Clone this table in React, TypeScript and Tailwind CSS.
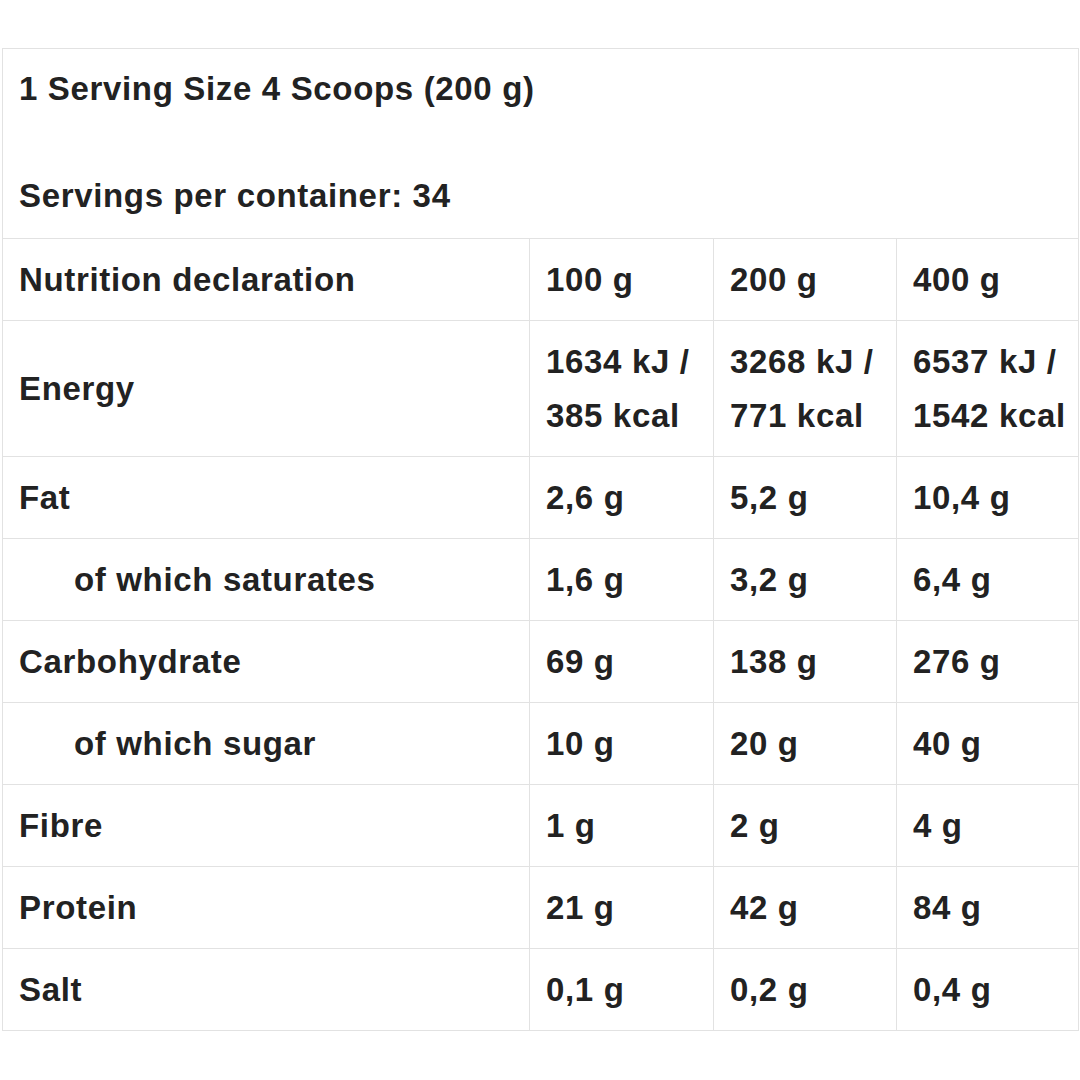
type Row = {
  label: string;
  indent?: boolean;
  values: string[][];
  tall?: boolean;
};

const rows: Row[] = [
  { label: 'Nutrition declaration', values: [['100 g'], ['200 g'], ['400 g']] },
  {
    label: 'Energy',
    tall: true,
    values: [
      ['1634 kJ /', '385 kcal'],
      ['3268 kJ /', '771 kcal'],
      ['6537 kJ /', '1542 kcal'],
    ],
  },
  { label: 'Fat', values: [['2,6 g'], ['5,2 g'], ['10,4 g']] },
  { label: 'of which saturates', indent: true, values: [['1,6 g'], ['3,2 g'], ['6,4 g']] },
  { label: 'Carbohydrate', values: [['69 g'], ['138 g'], ['276 g']] },
  { label: 'of which sugar', indent: true, values: [['10 g'], ['20 g'], ['40 g']] },
  { label: 'Fibre', values: [['1 g'], ['2 g'], ['4 g']] },
  { label: 'Protein', values: [['21 g'], ['42 g'], ['84 g']] },
  { label: 'Salt', values: [['0,1 g'], ['0,2 g'], ['0,4 g']] },
];

export default function App() {
  return (
    <div className="min-h-[1080px] w-[1080px] bg-white pt-12 pl-[2px] font-['Liberation_Sans',Arial,sans-serif] text-[33px] font-bold tracking-[0.02em] text-[#222]">
      <table className="w-[1076px] table-fixed border-collapse">
        <colgroup>
          <col className="w-[527px]" />
          <col className="w-[184px]" />
          <col className="w-[183px]" />
          <col className="w-[182px]" />
        </colgroup>
        <tbody>
          <tr className="h-[190px]">
            <td colSpan={4} className="border border-[#e2e2e2] px-4 align-top">
              <p className="pt-[22px] leading-[36px]">1 Serving Size 4 Scoops (200 g)</p>
              <p className="pt-[71px] leading-[36px]">Servings per container: 34</p>
            </td>
          </tr>
          {rows.map((row) => (
            <tr key={row.label} className={row.tall ? 'h-[136px]' : 'h-[82px]'}>
              <td className={`border border-[#e2e2e2] ${row.indent ? 'pl-[71px]' : 'pl-4'} pr-4`}>{row.label}</td>
              {row.values.map((lines, i) => (
                <td key={i} className="whitespace-nowrap border border-[#e2e2e2] pl-4 pr-0 leading-[54px]">
                  {lines.map((l) => (
                    <div key={l}>{l}</div>
                  ))}
                </td>
              ))}
            </tr>
          ))}
        </tbody>
      </table>
    </div>
  );
}
